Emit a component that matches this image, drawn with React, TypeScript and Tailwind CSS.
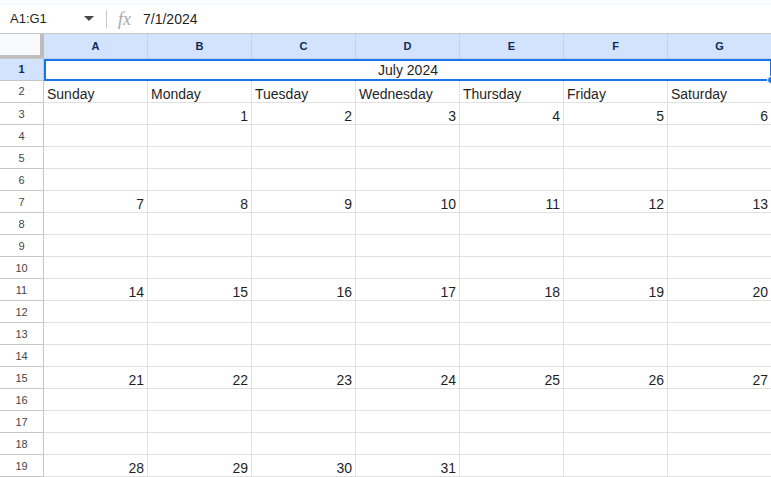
import React from 'react';

const cols = ['A', 'B', 'C', 'D', 'E', 'F', 'G'];
const days = ['Sunday', 'Monday', 'Tuesday', 'Wednesday', 'Thursday', 'Friday', 'Saturday'];

// date rows: row number -> values per column
const weeks: Record<number, (number | null)[]> = {
  3: [null, 1, 2, 3, 4, 5, 6],
  7: [7, 8, 9, 10, 11, 12, 13],
  11: [14, 15, 16, 17, 18, 19, 20],
  15: [21, 22, 23, 24, 25, 26, 27],
  19: [28, 29, 30, 31, null, null, null],
};

const rows = Array.from({ length: 17 }, (_, i) => i + 3);

export default function App() {
  return (
    <div
      className="w-[771px] h-[477px] overflow-hidden bg-white text-[#1f1f1f]"
      style={{ fontFamily: '"Liberation Sans", Arial, sans-serif' }}
    >
      {/* top strip */}
      <div className="h-[5px] bg-[#f9fbfd]" />

      {/* formula bar */}
      <div className="h-[29px] flex items-center border-b border-[#c7c7c7] bg-white">
        <div className="w-[100px] flex items-center pl-[10px] pr-[6px] text-[13px]">
          <span className="flex-1">A1:G1</span>
          <svg width="10" height="6" viewBox="0 0 10 6">
            <path d="M0 0 L10 0 L5 5 Z" fill="#444746" />
          </svg>
        </div>
        <div className="w-px h-[18px] bg-[#c7c7c7] ml-[6px]" />
        <span
          className="ml-[11px] text-[18px] italic text-[#a8a8a8] leading-none"
          style={{ fontFamily: '"Liberation Serif", "Times New Roman", serif' }}
        >
          fx
        </span>
        <span className="ml-[12px] text-[14px]">7/1/2024</span>
      </div>

      {/* grid */}
      <div className="grid grid-cols-[44px_repeat(7,104px)] grid-rows-[25px_repeat(19,22px)]">
        {/* corner */}
        <div className="relative bg-[#f8f9fa] border-b border-[#c7c7c7]">
          <div className="absolute right-0 top-0 w-[4px] h-full bg-[#bdbdbd]" />
          <div className="absolute left-0 bottom-0 w-full h-[3px] bg-[#bdbdbd]" />
        </div>
        {cols.map((c) => (
          <div
            key={c}
            className="flex items-center justify-center bg-[#d3e3fd] border-r border-b border-[#c4d3ec] text-[11px] font-bold text-[#0b2a5c]"
          >
            {c}
          </div>
        ))}

        {/* row 1 */}
        <div className="flex items-center justify-center bg-[#d3e3fd] border-r border-b border-[#c7c7c7] text-[11px] font-bold text-[#0b2a5c]">
          1
        </div>
        <div className="relative col-span-7 flex items-center justify-center border-2 border-[#1a73e8] text-[14px]">
          July 2024
          <div className="absolute right-[-5px] bottom-[-5px] w-[8px] h-[8px] rounded-full bg-[#1a73e8] border border-white" />
        </div>

        {/* row 2 */}
        <div className="flex items-center justify-center border-r border-b border-[#c7c7c7] text-[11px] text-[#444746]">
          2
        </div>
        {days.map((d) => (
          <div key={d} className="flex items-end pl-[3px] border-r border-b border-[#e1e1e1] text-[14px] leading-[16px]">
            {d}
          </div>
        ))}

        {rows.map((r) => (
          <React.Fragment key={r}>
            <div className="flex items-center justify-center pt-px border-r border-b border-[#c7c7c7] text-[11px] text-[#444746]">
              {r}
            </div>
            {cols.map((c, i) => (
              <div
                key={c}
                className="flex items-end justify-end pr-[3px] border-r border-b border-[#e1e1e1] text-[14px] leading-[16px]"
              >
                {weeks[r]?.[i] ?? ''}
              </div>
            ))}
          </React.Fragment>
        ))}
      </div>
    </div>
  );
}
